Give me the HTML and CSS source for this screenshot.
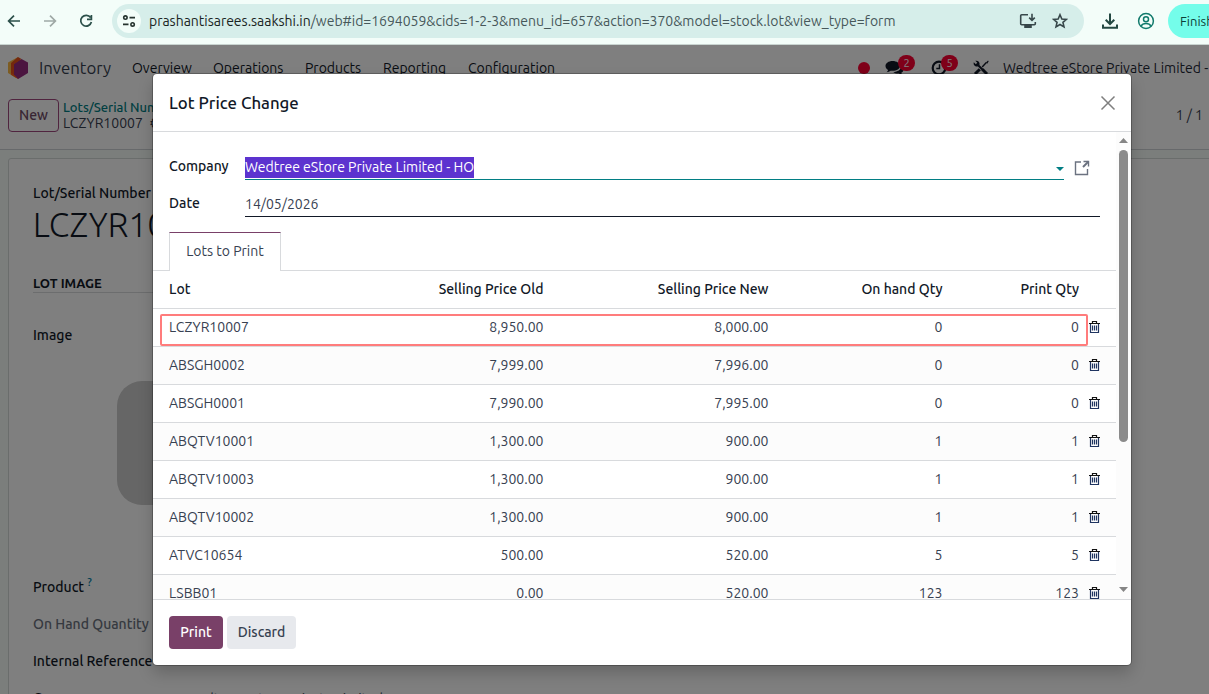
FILE: index.html
```html
<!DOCTYPE html>
<html lang="en">
<head>
  <meta charset="UTF-8">
  <title>Inventory - Lot Price Change</title>
  <link rel="stylesheet" href="styles.css">
</head>
<body>

  <header class="browser-bar">
    <svg class="nav-icon" viewBox="0 0 16 16"><path d="M14 8H3M8 2.6L2.6 8L8 13.4"/></svg>
    <svg class="nav-icon disabled" viewBox="0 0 16 16"><path d="M2 8h11M8 2.6L13.4 8L8 13.4"/></svg>
    <svg class="nav-icon" viewBox="0 0 16 16"><path d="M12.6 4.6A5.4 5.4 0 1 0 13.4 9M13.4 2v4.4H9"/></svg>
    <div class="address">
      <span class="site-info">
        <svg width="14" height="14" viewBox="0 0 14 14"><circle cx="3.4" cy="3.6" r="1.7"/><path d="M7.5 3.6H13M1 10.4h5.5"/><circle cx="10.6" cy="10.4" r="1.7"/></svg>
      </span>
      <span class="url"><span class="host">prashantisarees.saakshi.in</span>/web#id=1694059&amp;cids=1-2-3&amp;menu_id=657&amp;action=370&amp;model=stock.lot&amp;view_type=form</span>
      <svg class="install" width="18" height="16" viewBox="0 0 18 16"><path d="M9 1.8H2.7a1 1 0 0 0-1 1v7.900a1 1 0 0 0 1 1h12.600a1 1 0 0 0 1-1V9M13 .8v6M10.200 4.600L13 7.400l2.800-2.800"/><path d="M6 12h6v2.300H6z" fill="#37474a"/></svg>
      <svg class="star" width="16" height="16" viewBox="0 0 16 16"><path d="M8 1.700l1.850 4.250 4.600.4-3.500 3.050 1.050 4.500L8 11.500l-4 2.400 1.050-4.500-3.500-3.050 4.600-.4z"/></svg>
    </div>
    <svg class="download" width="18" height="18" viewBox="0 0 18 18"><path d="M9 1.500v10M4.700 7.700L9 12l4.300-4.300M2 12.500v3.300h14v-3.300"/></svg>
    <svg class="profile" width="18" height="18" viewBox="0 0 18 18"><circle cx="9" cy="9" r="7.400"/><circle cx="9" cy="7.200" r="2.500"/><path d="M4 14.200c1-1.900 2.800-2.600 5-2.600s4 .7 5 2.600"/></svg>
    <div class="finish">Finish update</div>
  </header>

  <div class="app">
    <nav class="navbar">
      <svg class="logo" width="20" height="22" viewBox="0 0 20 22">
        <path d="M10 0L0 5.500v10.500L8 21V8z" fill="#fbb945"/>
        <path d="M11 1.500L3 6.500v11.300L10 22l5-14z" fill="#ff5c1a"/>
        <path d="M13.500 2L6 7v10.500L10.200 22 20 16V5.500z" fill="#962b80"/>
        <path d="M10 0l3.500 2L6 7v10.500L3 16V6z" fill="#e8501b"/>
      </svg>
      <span class="app-name">Inventory</span>
      <span class="menu overview">Overview</span>
      <span class="menu operations">Operations</span>
      <span class="menu products">Products</span>
      <span class="menu reporting">Reporting</span>
      <span class="menu">Configuration</span>
      <div class="systray">
        <i class="dot"></i>
        <span class="tray chat">
          <svg width="19" height="17" viewBox="0 0 19 17"><path d="M7.500 1C3.600 1 .5 3.200.5 6c0 1.600 1 3 2.600 3.900-.2.900-.8 1.700-1.500 2.300 1.600-.1 3-.7 4-1.500 5 .8 9.400-1.500 9.400-4.700 0-2.800-3.200-5-7.500-5z"/><path d="M16.200 6.500c0 3.200-3.600 5.300-7.900 5.600 1.700 1.500 4 1.700 5.600 1.400 1 .8 2.300 1.300 3.700 1.300-.7-.6-1.100-1.300-1.300-2.100 2.800-1.500 2.900-4.500-.1-6.200z"/></svg>
          <b class="badge">2</b>
        </span>
        <span class="tray clock">
          <svg width="16" height="16" viewBox="0 0 16 16"><circle cx="8" cy="8" r="6.300"/><path class="hands" d="M8.500 4.300v4.200H5.300"/></svg>
          <b class="badge">5</b>
        </span>
        <svg class="tools" width="16" height="16" viewBox="0 0 16 16"><path class="driver" d="M9.200 7L13.300 2.600"/><path class="solid" d="M15 .5l.7.7-1.500 2.600-1.300-1.200z"/><path class="handle" d="M2 14l4.800-4.800"/><path class="handle" d="M9.300 9.300l4.700 4.700"/><path d="M5.200 5.200l4.500 4.500"/><path class="solid" d="M.8 2.300l2 2 1.500-1.500-2-2c2.200-.7 4.700.8 4.300 3.600L4.600 6.500C2.200 7 0 5 .8 2.300z"/></svg>
        <span class="company-name">Wedtree eStore Private Limited - HO</span>
      </div>
    </nav>

    <div class="control-panel">
      <button class="new-btn">New</button>
      <div class="breadcrumb">
        <a>Lots/Serial Numbers</a>
        <span>LCZYR10007 <i class="gear">⚙</i></span>
      </div>
      <span class="pager">1 / 1</span>
    </div>

    <main class="content">
      <div class="sheet">
        <div class="label">Lot/Serial Number</div>
        <div class="lot-name">LCZYR10007</div>
        <div class="section-title">LOT IMAGE</div>
        <div class="label image-label">Image</div>
        <div class="placeholder"></div>
        <div class="info-row"><span class="label">Product <sup>?</sup></span></div>
        <div class="info-row"><span class="label muted">On Hand Quantity</span></div>
        <div class="info-row"><span class="label">Internal Reference</span></div>
        <div class="info-row"><span class="label">Company</span><span class="value">Wedtree eStore Private Limited</span></div>
      </div>
    </main>
    <div class="backdrop"></div>
  </div>

  <div class="modal">
    <div class="modal-header">
      <h4>Lot Price Change</h4>
      <svg width="16" height="16" viewBox="0 0 16 16"><path d="M1.500 1.500l13 13M14.500 1.500l-13 13"/></svg>
    </div>

    <div class="modal-body">
      <div class="form-area">
        <div class="field">
          <label>Company</label>
          <div class="input company"><span class="selected">Wedtree eStore Private Limited - HO</span><i class="caret"></i></div>
          <svg class="external" width="16" height="16" viewBox="0 0 16 16"><path d="M7 2H1.500v12.500h12V9M9.500 1.500h5v5"/><path d="M14.500 1.500L9 7" class="arrow"/></svg>
        </div>
        <div class="field date">
          <label>Date</label>
          <div class="input">14/05/2026</div>
        </div>
        <div class="tabs"><div class="tab">Lots to Print</div></div>
        <div class="lots">
          <div class="row head"><span>Lot</span><span>Selling Price Old</span><span>Selling Price New</span><span>On hand Qty</span><span>Print Qty</span></div>
          <div id="rows"></div>
          <div class="marker"></div>
        </div>
      </div>
      <div class="scrollbar"><i class="up"></i><i class="thumb"></i><i class="down"></i></div>
    </div>

    <div class="modal-footer">
      <button class="primary">Print</button>
      <button class="secondary">Discard</button>
    </div>
  </div>

  <script>
    const lots = [
      ['LCZYR10007', '8,950.00', '8,000.00', '0', '0'],
      ['ABSGH0002', '7,999.00', '7,996.00', '0', '0'],
      ['ABSGH0001', '7,990.00', '7,995.00', '0', '0'],
      ['ABQTV10001', '1,300.00', '900.00', '1', '1'],
      ['ABQTV10003', '1,300.00', '900.00', '1', '1'],
      ['ABQTV10002', '1,300.00', '900.00', '1', '1'],
      ['ATVC10654', '500.00', '520.00', '5', '5'],
      ['LSBB01', '0.00', '520.00', '123', '123']
    ];

    const trash = '<svg class="trash" width="11" height="12" viewBox="0 0 11 12"><path class="lid" d="M0 2.500h11M3.500 2V.5h4V2"/><path class="can" d="M1.500 3v8.500h8V3"/><path class="bars" d="M3.500 4.500v5M5.500 4.500v5M7.500 4.500v5"/></svg>';

    document.getElementById('rows').innerHTML = lots.map(lot => `
      <div class="row">${lot.map(cell => `<span>${cell}</span>`).join('')}${trash}</div>
    `).join('');
  </script>
</body>
</html>
```
FILE: styles.css
```css
* {
  box-sizing: border-box;
}

body {
  margin: 0;
  height: 694px;
  overflow: hidden;
  position: relative;
  font-family: Ubuntu, "Noto Sans", sans-serif;
  font-size: 14px;
  line-height: 21px;
  color: #374151;
  background: white;
}

svg {
  fill: none;
  flex: none;
}

/* browser toolbar */
.browser-bar {
  height: 45px;
  padding: 0 0 3px 6px;
  display: flex;
  align-items: center;
  background: #f3fdf9;
  border-bottom: 1px solid #c8d4d0;
  overflow: hidden;
  white-space: nowrap;
}

.nav-icon {
  width: 16px;
  height: 16px;
  margin-right: 20px;
  stroke: #2b504a;
  stroke-width: 1.7;
}

.nav-icon.disabled {
  stroke: #9fa9a6;
}

.address {
  width: 972px;
  height: 34px;
  margin-left: -2px;
  padding-left: 5px;
  flex: none;
  display: flex;
  align-items: center;
  border-radius: 17px;
  background: #d6eeea;
}

.site-info {
  width: 24px;
  height: 24px;
  display: flex;
  align-items: center;
  justify-content: center;
  border-radius: 50%;
  background: #f3fdf9;
  stroke: #26332f;
  stroke-width: 1.6;
}

.url {
  width: 870px;
  margin-left: 8px;
  padding-top: 1px;
  color: #47585a;
  letter-spacing: -0.02px;
}

.host {
  color: #1a2423;
}

.install, .star {
  stroke: #37474a;
  stroke-width: 1.6;
}

.star {
  margin-left: 15px;
}

.download {
  margin-left: 17px;
  stroke: #234842;
  stroke-width: 2;
}

.profile {
  margin-left: 18px;
  stroke: #117a6c;
  stroke-width: 1.5;
}

.finish {
  width: 110px;
  height: 34px;
  margin-left: 13px;
  padding-left: 12px;
  flex: none;
  line-height: 35px;
  font-size: 13px;
  border-radius: 17px;
  background: #74fdea;
  color: #0c3f38;
}

/* page under the dialog */
.app {
  height: 649px;
  position: relative;
  overflow: hidden;
}

.backdrop {
  position: absolute;
  inset: 0;
  background: rgba(0, 0, 0, .5);
}

.navbar {
  height: 46px;
  padding-left: 8px;
  display: flex;
  align-items: center;
  white-space: nowrap;
  color: #374151;
}

.app-name {
  width: 93px;
  margin-left: 11px;
  padding-bottom: 1px;
  font-size: 16.8px;
}

.menu {
  color: #111827;
}

.overview { width: 81px; }
.operations { width: 92px; }
.products { width: 78px; }
.reporting { width: 85px; }

.systray {
  margin-left: auto;
  width: 351px;
  flex: none;
  display: flex;
  align-items: center;
}

.dot {
  width: 12px;
  height: 12px;
  flex: none;
  border-radius: 50%;
  background: #ff0032;
}

.tray {
  position: relative;
  display: flex;
}

.chat {
  margin-left: 15px;
}

.chat svg {
  fill: #111827;
}

.clock {
  margin-left: 27px;
  stroke: #111827;
  stroke-width: 2.2;
}

.hands {
  stroke-width: 1.5;
}

.badge {
  position: absolute;
  left: 13px;
  top: -5px;
  width: 17px;
  height: 16px;
  border-radius: 8px;
  background: #ff0032;
  color: white;
  font-size: 11px;
  font-weight: 400;
  line-height: 16px;
  text-align: center;
}

.clock .badge {
  left: 10px;
}

.tools {
  margin-left: 26px;
  stroke: #111827;
  stroke-width: 2;
}

.tools .solid {
  fill: #111827;
  stroke: none;
}

.tools .driver {
  stroke-width: 1.4;
}

.tools .handle {
  stroke-width: 3;
}

.company-name {
  margin-left: 14px;
  color: #1f2937;
}

.control-panel {
  height: 59px;
  padding: 0 7px 9px 8px;
  display: flex;
  align-items: center;
  border-bottom: 1px solid #cfd2d6;
}

button {
  font: inherit;
  font-weight: 500;
  border-radius: 4px;
}

.new-btn {
  width: 51px;
  height: 33px;
  padding: 0;
  border: 1px solid #a0487f;
  background: none;
  color: #714b67;
}

.breadcrumb {
  width: 200px;
  margin-left: 4px;
  display: flex;
  flex-direction: column;
  line-height: 16px;
  font-size: 14px;
  white-space: nowrap;
}

.breadcrumb a {
  margin-top: -1px;
  color: #017e84;
  font-weight: 500;
  font-size: 13px;
}

.gear {
  margin-left: 3px;
  font-style: normal;
}

.pager {
  margin-left: auto;
  margin-right: -1px;
}

.content {
  height: 560px;
  padding: 8px 0 0 8px;
  background: #f6fcf9;
}

.sheet {
  height: 552px;
  width: 1300px;
  padding: 24px;
  border: 1px solid #d4dad8;
  border-radius: 3px 0 0 0;
  background: white;
}

.label {
  font-weight: 500;
  color: #111827;
}

.lot-name {
  height: 43px;
  line-height: 42px;
  font-size: 33.6px;
  font-weight: 300;
  color: #111827;
}

.section-title {
  width: 540px;
  height: 19px;
  margin-top: 27px;
  line-height: 19px;
  font-size: 13px;
  font-weight: 700;
  color: #111827;
  border-bottom: 1px solid #d8dadd;
}

.image-label {
  margin-top: 32px;
}

.placeholder {
  width: 125px;
  height: 124px;
  margin: 35px 0 64px 84px;
  border-radius: 25px;
  background: #ccc;
}

.info-row {
  height: 37px;
  display: grid;
  grid-template-columns: 152px 1fr;
  line-height: 37px;
}

.info-row sup {
  font-size: 11px;
  line-height: 0;
  color: #0180a5;
}

.value {
  padding-top: 1px;
}

.muted {
  color: #6b7280;
}

/* dialog */
.modal {
  position: absolute;
  left: 153px;
  top: 74px;
  width: 978px;
  height: 591px;
  display: flex;
  flex-direction: column;
  overflow: hidden;
  border-radius: 4px;
  background: white;
  box-shadow: 0 0 0 1px rgba(0, 0, 0, .25), 0 8px 16px rgba(0, 0, 0, .2);
}

.modal-header {
  height: 58px;
  padding: 0 15px 0 16px;
  flex: none;
  display: flex;
  align-items: center;
  justify-content: space-between;
  border-bottom: 1px solid #d8dadd;
}

.modal-header h4 {
  margin: 0;
  font-size: 16.8px;
  font-weight: 500;
  color: #111827;
}

.modal-header svg {
  stroke: #7f7f7f;
  stroke-width: 1.5;
}

.modal-body {
  height: 467px;
  flex: none;
  display: flex;
  overflow: hidden;
}

.form-area {
  width: 963px;
  padding-top: 24px;
}

.field {
  height: 37px;
  margin: 0 16px;
  display: flex;
  align-items: flex-start;
}

.field label {
  width: 76px;
  font-weight: 500;
  color: #111827;
}

.input {
  height: 24px;
  flex: 1;
  padding-top: 1px;
  border-bottom: 1px solid #111827;
}

.input.company {
  flex: none;
  width: 819px;
  display: flex;
  justify-content: space-between;
  border-color: #017e84;
}

.selected {
  height: 21px;
  background: #5c33cf;
  color: white;
}

.caret {
  margin: 10px 0 0;
  width: 8px;
  height: 4px;
  background: #017e84;
  clip-path: polygon(0 0, 100% 0, 50% 100%);
}

.external {
  margin: 4px 0 0 10px;
  stroke: #6b7280;
  stroke-width: 1.4;
}

.external .arrow {
  stroke-width: 2;
}

.tabs {
  height: 41px;
  padding: 2px 16px 0;
  border-bottom: 1px solid #d8dadd;
}

.tab {
  width: 112px;
  height: 39px;
  line-height: 37px;
  text-align: center;
  color: #374151;
  border: 1px solid #d8dadd;
  border-top-color: #794068;
  border-bottom: 0;
  background: white;
}

.lots {
  position: relative;
}

.row {
  height: 38px;
  padding: 0 15px 0 16px;
  display: grid;
  grid-template-columns: 149.500px 225px 225px 174px 136.500px 21px;
  align-items: center;
  text-align: right;
  border-bottom: 1px solid #d8dadd;
}

.row span:first-child {
  text-align: left;
}

.row.head {
  font-weight: 500;
  color: #111827;
}

#rows .row:nth-child(even) {
  background: #fcfcfc;
}

.trash {
  justify-self: end;
  margin-bottom: 1px;
  stroke-width: 1.2;
}

.lid {
  stroke: #111;
}

.can, .bars {
  stroke: #1f3460;
}

.marker {
  position: absolute;
  left: 7px;
  top: 43px;
  width: 928px;
  height: 32px;
  border: 2px solid #ff7c7c;
  border-radius: 2px;
}

.scrollbar {
  width: 15px;
  display: flex;
  flex-direction: column;
  align-items: center;
  background: #fcfcfc;
}

.up, .down {
  width: 9px;
  height: 5px;
  margin-top: 6px;
  background: #858585;
  clip-path: polygon(0 100%, 50% 0, 100% 100%);
}

.thumb {
  width: 9px;
  height: 292px;
  margin-top: 7px;
  border-radius: 5px;
  background: #8b8b8b;
}

.down {
  margin-top: auto;
  margin-bottom: 7px;
  transform: rotate(180deg);
}

.modal-footer {
  flex: 1;
  padding: 16px;
  display: flex;
  align-items: flex-start;
  gap: 4px;
  border-top: 1px solid #d8dadd;
}

.modal-footer button {
  height: 33px;
  padding: 0;
  border: 0;
}

.primary {
  width: 54px;
  background: #794068;
  color: white;
}

.secondary {
  width: 69px;
  background: #e7e9ed;
  color: #374151;
}
```
